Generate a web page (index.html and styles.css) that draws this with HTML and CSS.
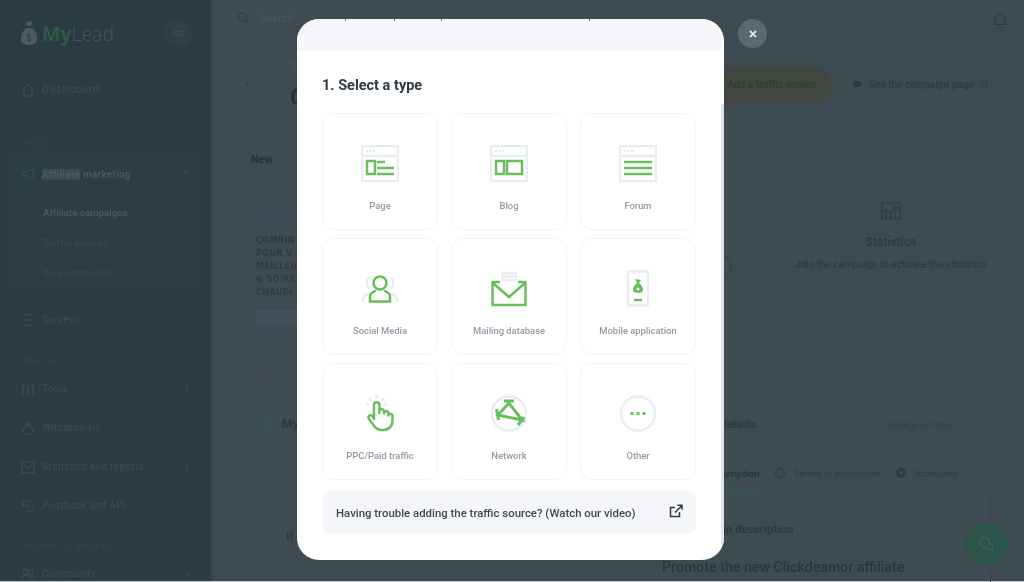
FILE: index.html
```html
<!DOCTYPE html>
<html lang="en">
<head>
    <meta charset="UTF-8">
    <meta name="viewport" content="width=device-width, initial-scale=1.0">
    <title>MyLead - Select a type</title>
    <link rel="stylesheet" href="styles.css">
</head>
<body>

    <div class="page">
        <aside class="sidebar">
            <div class="logo-row">
                <svg class="logo-bag" viewBox="0 0 16 24"><path d="M5 1l7-1-2 5h-4z" fill="#4b5b61"/><path d="M5 7h6c3 3 5 6 5 10 0 5-3 7-8 7s-8-2-8-7c0-4 2-7 5-10z" fill="#4b5b61"/><text x="8" y="20" class="logo-dollar">$</text></svg>
                <div class="logo-text"><b>My</b>Lead</div>
                <div class="toggle">
                    <svg viewBox="0 0 14 12" width="12" height="10"><path d="M6 1L1 6l5 5M2 4h11M2 8h11" fill="none" stroke="#3f5056" stroke-width="1.2"/></svg>
                </div>
            </div>

            <a class="nav-item nav-dashboard"><svg viewBox="0 0 14 14"><path d="M1 7l6-5 6 5M3 6v7h8V6" /></svg>Dashboard</a>

            <div class="nav-label nav-label-sales">SALES</div>
            <div class="nav-group">
                <a class="nav-item nav-open"><svg class="green" viewBox="0 0 14 14"><path d="M2 5h3l7-3v9L5 8H2zM4 8l1 4h2" /></svg><span><span class="mark">Affiliate</span> marketing</span><i class="chev chev-up"></i></a>
                <a class="sub-item sub-active">Affiliate campaigns</a>
                <a class="sub-item">Traffic sources</a>
                <a class="sub-item">Your campaigns</a>
            </div>
            <a class="nav-item nav-surveys"><svg viewBox="0 0 14 14"><path d="M2 2h10M2 7h10M2 12h10" /></svg>Surveys</a>

            <div class="nav-label nav-label-manage">MANAGE</div>
            <a class="nav-item"><svg viewBox="0 0 14 14"><path d="M2 1v12M7 1v12M12 1v12M0 5h4M5 9h4M10 4h4" /></svg>Tools<i class="chev"></i></a>
            <a class="nav-item"><svg viewBox="0 0 14 14"><path d="M5 1h4L8 4H6zM6 4C3 6 2 9 2 11c0 1 1 2 2 2h6c1 0 2-1 2-2 0-2-1-5-4-7" /></svg>Withdrawals</a>
            <a class="nav-item"><svg viewBox="0 0 14 14"><path d="M1 2h12v11H1zM1 9l3-3 3 3 5-5" /></svg>Statistics and reports<i class="chev"></i></a>
            <a class="nav-item"><svg viewBox="0 0 14 14"><path d="M2 7a5.500 5.500 0 1 1 2 4.200M2 3v4h4M7 4v3l2 2" /></svg>Postback and API</a>

            <div class="nav-label nav-label-part">BE PART OF MYLEAD</div>
            <a class="nav-item"><svg viewBox="0 0 14 14"><circle cx="5" cy="5" r="3"/><path d="M0 13c0-3 2-5 5-5s5 2 5 5M9 2a3 3 0 0 1 0 6M11 8c2 1 3 3 3 5" /></svg>Community<i class="chev"></i></a>
        </aside>

        <main class="main">
            <div class="topbar">
                <div class="search">
                    <svg viewBox="0 0 14 14" width="12" height="12"><circle cx="6" cy="6" r="4.600"/><path d="M9.500 9.500L13 13"/></svg>
                    Search
                </div>
                <svg class="bell" viewBox="0 0 14 16" width="14" height="16"><path d="M2 11V7a5 5 0 0 1 10 0v4l1.500 1.500h-12zM5 14.500a2 2 0 0 0 4 0"/></svg>
            </div>

            <div class="head">
                <div class="back">&larr;</div>
                <div class="head-title">
                    <div class="crumb">D</div>
                    <h1>C</h1>
                </div>
                <div class="head-actions">
                    <div class="pill">Add a traffic source</div>
                    <div class="page-link">
                        <svg viewBox="0 0 12 8" width="9" height="6"><path d="M0 4c3-5 9-5 12 0-3 5-9 5-12 0z" fill="#2c393f"/></svg>
                        See the campaign page
                        <svg viewBox="0 0 10 10" width="7" height="7"><path d="M8 5.500V9H1V2h3.500M5 1h4v4"/></svg>
                    </div>
                </div>
            </div>

            <div class="top-grid">
                <section class="offer">
                    <div class="badge-new">New</div>
                    <div class="offer-card">
                        <div class="offer-brand">CLICK</div>
                        <div class="offer-lines">COMBIN<br>POUR V<br>MEILLEU<br>&amp; SOIRÉ<br>CHAUDI</div>
                        <div class="offer-strip"></div>
                    </div>
                    <svg class="heart" viewBox="0 0 10 9" width="8" height="7"><path d="M5 8L1 4a2.200 2.200 0 0 1 4-2 2.200 2.200 0 0 1 4 2z"/></svg>
                </section>
                <div class="ring"></div>
                <section class="stats">
                    <svg viewBox="0 0 20 18" width="20" height="18"><path d="M1 1h18v16H1zM0 12l5-5 5 4 4-6 6 3M5 7v10M10 11v6M14 5v12"/></svg>
                    <h3>Statistics</h3>
                    <p>Join the campaign to activate the statistics</p>
                </section>
            </div>

            <div class="low-grid">
                <section class="my-sources">
                    <div class="my-title">
                        <svg viewBox="0 0 12 12" width="12" height="12"><path d="M2 0v12M6 0v12M10 0v12M0 4h4M4 8h4M8 3h4"/></svg>
                        My
                    </div>
                    <p class="my-note">If</p>
                </section>
                <section class="details">
                    <div class="details-head">
                        <div class="details-title">Campaign details</div>
                        <div class="enlarge">Enlarge section</div>
                    </div>
                    <div class="tabs">
                        <div class="tab tab-active">Description</div>
                        <div class="tab"><i class="tab-dot"></i>Terms of promotion</div>
                        <div class="tab"><i class="tab-dot tab-dot-solid"></i>Attributes</div>
                    </div>
                    <div class="desc-title">Campaign description</div>
                    <div class="desc-big">Promote the new Clickdeamor affiliate</div>
                </section>
            </div>
        </main>
    </div>

    <div class="chat-line"></div>
    <div class="chat">
        <svg viewBox="0 0 16 16" width="16" height="16"><circle cx="6.500" cy="6.500" r="5"/><path d="M12 7c2 1 3 3 2 5l1 2-3-1c-2 1-4 0-5-1"/></svg>
    </div>

    <div class="modal">
        <div class="modal-scroll">
            <div class="modal-band"><i></i><i></i><i></i><i></i></div>
            <div class="modal-body">
                <h2>1. Select a type</h2>
                <div class="type-grid">
                    <div class="type-card">
                        <svg viewBox="0 0 38 37"><use href="#frame"/><rect class="g" x="6" y="16" width="8" height="13"/><path class="g" d="M16 17h8M16 23h17M16 29h17"/></svg>
                        <span>Page</span>
                    </div>
                    <div class="type-card">
                        <svg viewBox="0 0 38 37"><use href="#frame"/><rect class="g" x="6" y="16" width="8" height="13"/><rect class="g" x="17" y="16" width="15" height="13"/></svg>
                        <span>Blog</span>
                    </div>
                    <div class="type-card">
                        <svg viewBox="0 0 38 37"><use href="#frame"/><path class="g" d="M5 17h28M5 23h28M5 29h28"/></svg>
                        <span>Forum</span>
                    </div>
                    <div class="type-card">
                        <svg viewBox="0 0 38 37"><path class="s" d="M8 7c-3 3-3 8 0 11M30 7c3 3 3 8 0 11M2 32c0-5 1-7 5-8M36 32c0-5-1-7-5-8"/><circle class="g" cx="19" cy="13" r="6.500"/><path class="g" d="M14 20c0 3-5 2-5 6v5.500h20V26c0-4-5-3-5-6"/></svg>
                        <span>Social Media</span>
                    </div>
                    <div class="type-card">
                        <svg viewBox="0 0 38 37"><path class="s" d="M11 3h16M11 6.500h16M11 10h16"/><path class="g g-round" d="M10 12H2.500v23h33V12H28M3 13l16 14 16-14"/></svg>
                        <span>Mailing database</span>
                    </div>
                    <div class="type-card">
                        <svg viewBox="0 0 38 37"><rect class="s" x="9" y="1.500" width="20" height="34" rx="1.500"/><path class="fill" d="M16 9l6 1-2 3c3 2 4 5 4 7 0 2-2 3-5 3s-5-1-5-3c0-2 1-5 4-7z"/><circle cx="19" cy="19" r="1.500" fill="#fff"/><path class="g" d="M15 30h8"/></svg>
                        <span>Mobile application</span>
                    </div>
                    <div class="type-card">
                        <svg viewBox="0 0 38 37"><path class="s" d="M15.500 0v4M8 3l2.500 3M23 3l-2.500 3M5 9.500h3M23 9.500h3"/><path class="g g-round" d="M13 24V10a2.700 2.700 0 0 1 5.400 0v8v-1.500a2.300 2.300 0 0 1 4.600 0v2a2.200 2.200 0 0 1 4.400 0v2a2.100 2.100 0 0 1 4.100 0v5c0 6-4 9.500-9 9.500h-2c-3 0-5-1-7-3.500l-5.500-7.500c-2-2.500 1.500-5 3.500-3z"/></svg>
                        <span>PPC/Paid traffic</span>
                    </div>
                    <div class="type-card">
                        <svg viewBox="0 0 38 37"><circle class="s" cx="19" cy="18.500" r="17"/><path class="g g-heavy" d="M19 8L8 20l24 5zM14 6h10M6.500 14l2 11M28 30l6-8"/></svg>
                        <span>Network</span>
                    </div>
                    <div class="type-card">
                        <svg viewBox="0 0 38 37"><circle class="s" cx="19" cy="18.500" r="17"/><path class="fill" d="M11.500 17h3v3h-3zM17.500 17h3v3h-3zM23.500 17h3v3h-3z"/></svg>
                        <span>Other</span>
                    </div>
                </div>
                <a class="video-link">
                    Having trouble adding the traffic source? (Watch our video)
                    <svg viewBox="0 0 14 14" width="14" height="14"><path d="M10.500 8v4.500h-9v-9H6M6 8.500L12.500 2M8.500 1.200h4.500v4.500"/></svg>
                </a>
            </div>
        </div>
        <div class="modal-scrollbar"></div>
    </div>
    <div class="modal-close">
        <svg viewBox="0 0 8 8" width="8" height="8"><path d="M1 1l6 6M7 1L1 7"/></svg>
    </div>

    <svg class="defs" width="0" height="0">
        <defs>
            <g id="frame">
                <rect class="s" x="1" y="1" width="36" height="10" fill="none"/>
                <path class="s" d="M1 13v23h36V13"/>
                <path class="dots" d="M5 6h2M8.500 6h2M12 6h2"/>
            </g>
        </defs>
    </svg>

</body>
</html>
```

FILE: styles.css
```css
/* General Reset */
* {
    margin: 0;
    padding: 0;
    box-sizing: border-box;
}

body {
    width: 1024px;
    height: 582px;
    overflow: hidden;
    position: relative;
    background: #bfc7ca;
    font-family: 'Roboto', sans-serif;
}

.defs {
    position: absolute;
}

/* Dimmed page behind the modal */
.page {
    display: flex;
    height: 581px;
    overflow: hidden;
    background: #3e4b52;
    filter: blur(0.7px);
}

.sidebar {
    width: 210px;
    flex-shrink: 0;
    background: #2a3b42;
    color: #3a4b52;
    font-size: 10px;
    font-weight: 500;
    letter-spacing: 0.3px;
    box-shadow: 3px 0 0 #33454c;
    padding: 0 8px;
}

.sidebar svg {
    width: 14px;
    height: 14px;
    fill: none;
    stroke: #3f5158;
    stroke-width: 1;
    flex-shrink: 0;
}

.sidebar svg.green {
    stroke: #2f5a48;
}

.logo-row {
    display: flex;
    align-items: center;
    height: 66px;
    padding-left: 13px;
}

.sidebar svg.logo-bag {
    width: 16px;
    height: 24px;
    stroke: none;
}

.logo-dollar {
    font-size: 9px;
    font-weight: 700;
    fill: #2a3b42;
    stroke: none;
    text-anchor: middle;
}

.logo-text {
    font-family: 'Open Sans', sans-serif;
    font-size: 19.5px;
    font-weight: 300;
    letter-spacing: 0;
    color: #43555c;
    margin-left: 5px;
    width: 114px;
}

.logo-text b {
    font-weight: 700;
    color: #2f5a48;
}

.toggle {
    width: 28px;
    height: 28px;
    border-radius: 50%;
    background: #2e3f46;
    display: flex;
    align-items: center;
    justify-content: center;
    margin-left: 8px;
}

.sidebar .toggle svg {
    width: 12px;
    height: 10px;
}

.nav-item {
    display: flex;
    align-items: center;
    gap: 7px;
    height: 39px;
    padding-left: 13px;
    position: relative;
}

.nav-dashboard {
    margin-top: 4px;
    font-size: 11px;
    letter-spacing: 0.5px;
}

.nav-label {
    font-size: 7px;
    letter-spacing: 1.5px;
    color: #33454c;
    padding-left: 13px;
}

.nav-label-sales {
    margin-top: 30px;
}

.nav-label-manage {
    margin-top: 18px;
    margin-bottom: 4px;
}

.nav-label-part {
    margin-top: 17px;
    margin-bottom: 4px;
}

.nav-group {
    background: #2c3d44;
    border-radius: 10px;
    margin-top: 4px;
    height: 136px;
    padding-top: 5px;
}

.nav-open {
    color: #4a5a60;
    height: 36px;
}

.mark {
    background: #3a4a50;
}

.sub-item {
    display: block;
    height: 30px;
    line-height: 30px;
    padding-left: 35px;
    font-size: 9.5px;
    letter-spacing: 0.1px;
    color: #38494f;
}

.sub-active {
    color: #4c5c62;
    margin-top: 6px;
}

.chev {
    position: absolute;
    right: 14px;
    top: 50%;
    width: 4px;
    height: 4px;
    margin-top: -2px;
    border-top: 1px solid #3a4b52;
    border-right: 1px solid #3a4b52;
    transform: rotate(45deg);
}

.chev-up {
    transform: rotate(-45deg);
}

.nav-surveys {
    margin-top: 13px;
}

.main {
    flex: 1;
    margin-left: 3px;
    min-width: 0;
    color: #2c393f;
}

.main svg {
    fill: none;
    stroke: #2e3b41;
    stroke-width: 1.2;
}

.topbar {
    display: flex;
    justify-content: space-between;
    align-items: center;
    height: 36px;
    padding: 0 17px 0 24px;
}

.search {
    display: flex;
    align-items: center;
    gap: 11px;
    font-size: 11px;
    color: #49565c;
}

.main svg.bell {
    margin-top: 3px;
}

.head {
    display: flex;
    align-items: center;
    height: 88px;
    padding-left: 30px;
}

.back {
    font-size: 13px;
    color: #2e3b41;
    width: 47px;
    margin-top: 2px;
}

.head-title {
    width: 30px;
    margin-top: 18px;
}

.crumb {
    font-size: 10px;
    color: #4a575d;
    margin-top: -6px;
}

h1 {
    font-size: 24px;
    color: #26343a;
    font-weight: 700;
    margin-top: 11px;
}

.head-actions {
    display: flex;
    align-items: center;
    margin-left: auto;
    margin-top: 8px;
    padding-right: 36px;
    flex-shrink: 0;
}

.pill {
    width: 135px;
    height: 35px;
    line-height: 35px;
    border-radius: 18px;
    background: #41463f;
    color: #303c3d;
    font-size: 10.2px;
    font-weight: 700;
    text-align: right;
    padding-right: 14px;
    box-shadow: 0 4px 6px rgba(60, 70, 70, 0.6);
}

.page-link {
    display: flex;
    align-items: center;
    gap: 7px;
    font-size: 10px;
    font-weight: 700;
    color: #2f3c42;
    margin-left: 22px;
}

.top-grid {
    display: grid;
    grid-template-columns: 400px 140px 200px;
    height: 290px;
    padding-left: 38px;
}

.badge-new {
    font-size: 11px;
    font-weight: 700;
    color: #263238;
    margin-top: 29px;
}

.offer-card {
    margin-top: 47px;
    padding-left: 5px;
}

.offer-brand {
    font-family: 'DejaVu Sans', sans-serif;
    font-size: 12px;
    color: #364c62;
    letter-spacing: 0.8px;
}

.offer-lines {
    font-family: 'DejaVu Sans', sans-serif;
    font-size: 8px;
    font-weight: 700;
    line-height: 13px;
    color: #2f3b40;
    letter-spacing: 0.4px;
    margin-top: 7px;
}

.offer-strip {
    width: 42px;
    height: 15px;
    background: #3f515b;
    margin-top: 11px;
}

.main svg.heart {
    display: block;
    margin: 44px 0 0 4px;
    stroke: #5c4038;
}

.ring {
    width: 22px;
    height: 22px;
    border: 1px solid #2e3b41;
    border-radius: 50%;
    justify-self: end;
    margin: 131px 59px 0 0;
}

.stats {
    text-align: center;
    padding-top: 78px;
    white-space: nowrap;
}

.stats h3 {
    font-size: 12px;
    margin-top: 11px;
    color: #2e3b41;
}

.stats p {
    font-size: 10px;
    font-weight: 500;
    margin-top: 10px;
    color: #2f3c42;
}

.low-grid {
    display: grid;
    grid-template-columns: 411px 1fr;
    padding-left: 38px;
}

.my-title {
    display: flex;
    align-items: center;
    gap: 11px;
    padding-left: 8px;
    font-size: 12px;
    font-weight: 700;
    margin-top: 3px;
}

.main .my-title svg {
    stroke: #2d5a48;
}

.my-note {
    font-size: 12px;
    font-weight: 500;
    padding-left: 35px;
    margin-top: 99px;
}

.details-head {
    display: flex;
    align-items: center;
    height: 16px;
    margin-top: 2px;
    white-space: nowrap;
}

.details-title {
    width: 226px;
    padding-left: 4px;
    font-size: 11.5px;
    font-weight: 700;
}

.enlarge {
    font-size: 9.2px;
    color: #333f45;
}

.tabs {
    display: flex;
    gap: 16px;
    height: 44px;
    margin-top: 31px;
    font-size: 9.8px;
    font-weight: 500;
    color: #333f45;
    padding-left: 47px;
}

.tab {
    display: flex;
    align-items: center;
    gap: 8px;
    height: 20px;
    white-space: nowrap;
}

.tab-active {
    position: relative;
    font-weight: 700;
    color: #2a363c;
}

.tab-active::after {
    content: "";
    position: absolute;
    left: 0;
    right: 0;
    bottom: -10px;
    height: 2px;
    background: #2d5a48;
}

.tab-dot {
    width: 10px;
    height: 10px;
    border: 1px solid #2e3b41;
    border-radius: 50%;
}

.tab-dot-solid {
    border-width: 3px;
}

.desc-title {
    font-size: 11.5px;
    font-weight: 700;
    margin-top: 15px;
    padding-left: 18px;
}

.desc-big {
    font-size: 14.2px;
    font-weight: 500;
    margin-top: 23px;
    white-space: nowrap;
    color: #2a373d;
}

/* Help button, bottom right */
.chat-line {
    position: absolute;
    left: 990px;
    top: 496px;
    width: 1px;
    height: 86px;
    background: #354349;
}

.chat {
    position: absolute;
    left: 964px;
    top: 522px;
    width: 44px;
    height: 44px;
    border-radius: 50%;
    background: #2c5349;
    display: flex;
    align-items: center;
    justify-content: center;
}

.chat svg {
    fill: none;
    stroke: #3f6a5e;
    stroke-width: 1;
}

/* Modal */
.modal {
    position: absolute;
    left: 297px;
    top: 19px;
    width: 427px;
    height: 541px;
    border-radius: 22px;
    background: #fff;
    overflow: hidden;
    filter: blur(0.35px);
}

.modal-scroll {
    width: 424px;
}

.modal-band {
    display: flex;
    height: 32px;
    background: #f4f6fa;
}

.modal-band i {
    width: 1px;
    height: 2px;
    background: #6a747b;
    margin-left: 48px;
}

.modal-band i:nth-child(3) {
    margin-left: 46px;
}

.modal-band i:nth-child(4) {
    margin-left: 147px;
}

.modal-scrollbar {
    position: absolute;
    right: 0;
    top: 85px;
    width: 3px;
    height: 441px;
    background: #e1e4e9;
}

.modal-body {
    padding: 0 25px;
}

h2 {
    font-size: 14.5px;
    font-weight: 700;
    line-height: 18px;
    color: #2b3a45;
    margin-top: 26px;
}

.type-grid {
    display: grid;
    grid-template-columns: repeat(3, 116px);
    grid-auto-rows: 117px;
    column-gap: 13px;
    row-gap: 8px;
    margin-top: 18px;
}

.type-card {
    display: flex;
    flex-direction: column;
    align-items: center;
    border: 1px solid #f2f4f7;
    border-radius: 12px;
    padding-top: 31px;
}

.type-card svg {
    width: 38px;
    height: 37px;
    fill: none;
}

.type-card span {
    margin-top: 18px;
    font-size: 9.4px;
    font-weight: 500;
    color: #929aa6;
}

.s {
    stroke: #e8edf0;
    stroke-width: 2.5;
    fill: none;
}

.dots {
    stroke: #e0e5e9;
    stroke-width: 2;
    stroke-dasharray: 2 1.500;
}

.g {
    stroke: #68bf5c;
    stroke-width: 2.5;
    fill: none;
}

.g-round {
    stroke-linejoin: round;
}

.g-heavy {
    stroke-width: 3;
}

.fill {
    fill: #68bf5c;
}

.video-link {
    display: flex;
    align-items: center;
    justify-content: space-between;
    height: 43px;
    margin-top: 11px;
    padding: 0 13px 0 14px;
    background: #f4f6fa;
    border-radius: 8px;
    font-size: 11.4px;
    font-weight: 500;
    color: #3d4a56;
    white-space: nowrap;
}

.video-link svg {
    fill: none;
    stroke: #2b3a45;
    stroke-width: 1.500;
    margin-top: -3px;
}

.modal-close {
    position: absolute;
    left: 738px;
    top: 19px;
    width: 29px;
    height: 29px;
    border-radius: 50%;
    background: #5b686e;
    display: flex;
    align-items: center;
    justify-content: center;
}

.modal-close svg {
    stroke: #dfe3e5;
    stroke-width: 1.800;
}
```
